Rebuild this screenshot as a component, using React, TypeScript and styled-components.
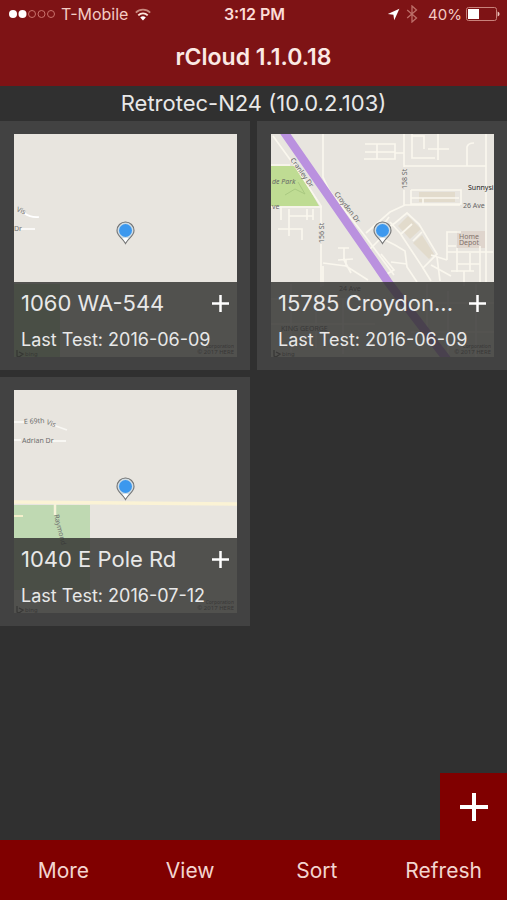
import React from "react";
import styled, { createGlobalStyle } from "styled-components";

const GlobalStyle = createGlobalStyle`
  *, *::before, *::after { box-sizing: border-box; }
  body {
    margin: 0;
    background: #303030;
    color: #e8e8e8;
    font-family: Inter, "Liberation Sans", sans-serif;
  }
  button { font: inherit; color: inherit; border: 0; padding: 0; cursor: pointer; }
  h1, h2, h3, p { margin: 0; font-weight: 400; }
`;

const Screen = styled.div`
  min-height: 100vh;
  display: flex;
  flex-direction: column;
`;

const Header = styled.header`
  background: #7e1315;
  color: #fbe9e4;
`;

const StatusBar = styled.div`
  display: grid;
  grid-template-columns: 1fr auto 1fr;
  align-items: center;
  height: 28px;
  padding: 0 7px 0 9px;
  font-size: 16px;
  color: #f3cbc4;
`;

const StatusGroup = styled.div<{ $end?: boolean }>`
  display: flex;
  align-items: center;
  gap: ${(p) => (p.$end ? 4 : 6)}px;
  justify-content: ${(p) => (p.$end ? "flex-end" : "flex-start")};
`;

const BatteryLevel = styled.span`
  padding-left: 4px;
  font-size: 15px;
`;

const Clock = styled.span`
  font-weight: 600;
  color: #fbdcd6;
`;

const Title = styled.h1`
  height: 58px;
  line-height: 58px;
  text-align: center;
  font-size: 23px;
  font-weight: 600;
`;

const DeviceName = styled.h2`
  height: 35px;
  line-height: 35px;
  text-align: center;
  font-size: 22px;
`;

const CardGrid = styled.main`
  flex: 1;
  display: grid;
  grid-template-columns: 1fr 1fr;
  align-content: start;
  gap: 7px;
`;

const Card = styled.article`
  min-width: 0;
  padding: 13px 13px 13px 14px;
  background: #424242;
`;

const MapFrame = styled.div`
  position: relative;
  aspect-ratio: 1;
  overflow: hidden;
  background: #e8e5df;
`;

const MapSvg = styled.svg`
  display: block;
  width: 100%;
  height: 100%;
  font-family: "Noto Sans", sans-serif;
`;

const Caption = styled.div`
  position: absolute;
  left: 0;
  right: 0;
  bottom: 0;
  height: 75px;
  padding: 0 8px 0 7px;
  background: rgba(48, 48, 46, 0.82);
`;

const CaptionRow = styled.div`
  display: flex;
  align-items: center;
  justify-content: space-between;
  height: 42px;
`;

const CardTitle = styled.h3`
  min-width: 0;
  font-size: 22px;
  line-height: 28px;
  white-space: nowrap;
  overflow: hidden;
  text-overflow: ellipsis;
`;

const LastTest = styled.p`
  font-size: 18px;
  line-height: 32px;
  white-space: nowrap;
`;

const IconButton = styled.button`
  display: flex;
  background: none;
`;

const Footer = styled.footer`
  position: sticky;
  bottom: 0;
`;

const AddButton = styled.button`
  position: absolute;
  right: 0;
  bottom: 100%;
  width: 67px;
  height: 67px;
  display: grid;
  place-items: center;
  background: #800000;
`;

const TabBar = styled.nav`
  display: grid;
  grid-template-columns: repeat(4, 1fr);
  height: 60px;
  background: #800000;
`;

const Tab = styled.button`
  background: none;
  color: #f3d5d0;
  font-size: 21px;
`;

const Plus = ({ size, stroke }: { size: number; stroke: number }) => (
  <svg width={size} height={size} viewBox={`0 0 ${size} ${size}`} aria-hidden="true">
    <path
      d={`M0 ${size / 2}H${size}M${size / 2} 0V${size}`}
      stroke="#fff"
      strokeWidth={stroke}
    />
  </svg>
);

const SignalIcon = () => (
  <svg width="46" height="10" viewBox="0 0 46 10" aria-hidden="true">
    <circle cx="4" cy="5" r="4" fill="#fff" />
    <circle cx="13.5" cy="5" r="4" fill="#fff" />
    <g fill="none" stroke="#c9726c" strokeWidth="1">
      <circle cx="23" cy="5" r="3.5" />
      <circle cx="32.5" cy="5" r="3.5" />
      <circle cx="42" cy="5" r="3.5" />
    </g>
  </svg>
);

const WifiIcon = () => (
  <svg width="18" height="13" viewBox="0 0 18 13" fill="none" aria-hidden="true">
    <path d="M1.8 4.6A10.2 10.2 0 0 1 16.2 4.6" stroke="#c98a80" strokeWidth="1.6" />
    <path d="M4.3 7.3A6.6 6.6 0 0 1 13.7 7.3" stroke="#fde6dc" strokeWidth="1.9" />
    <path d="M9 12.4L6.2 9.6A4 4 0 0 1 11.8 9.6Z" fill="#fff" />
  </svg>
);

const LocationIcon = () => (
  <svg width="13" height="13" viewBox="0 0 13 13" aria-hidden="true">
    <path d="M12.4 .7L7.2 12.2L6.4 6.8L.8 6.1Z" fill="#fff" />
  </svg>
);

const BluetoothIcon = () => (
  <svg width="16" height="18" viewBox="-2 0 16 18" fill="none" aria-hidden="true">
    <path d="M1.2 5L10.5 13L6 17V1L10.5 5L1.2 13" stroke="#bd6e68" strokeWidth="1.3" />
  </svg>
);

const BatteryIcon = () => (
  <svg width="34" height="14" viewBox="0 0 34 14" aria-hidden="true">
    <rect x=".5" y=".5" width="30" height="13" rx="2" fill="none" stroke="#c9827b" />
    <rect x="2" y="2" width="11" height="10" fill="#fff" />
    <path d="M31.6 4.5Q33.6 5.2 33.6 7T31.6 9.5Z" fill="#eec5bd" />
  </svg>
);

const Pin = () => (
  <g>
    <path
      d="M111.5 109.5C109 104 103 102.5 103 96.5A8.5 8.5 0 0 1 120 96.5C120 102.5 114 104 111.5 109.5Z"
      fill="#cfdde6"
      stroke="#747474"
      strokeWidth="1.1"
    />
    <path d="M108.5 104H114.5L111.5 108.5Z" fill="#fff" />
    <circle cx="111.5" cy="96.5" r="6.5" fill="#3c98ee" />
  </g>
);

const Attribution = () => (
  <g fill="#222" opacity=".7">
    <path d="M3 216V222L5 223L9 220L5 218" fill="none" stroke="#222" strokeWidth="1.3" />
    <text x="11" y="222" fontSize="6">bing</text>
    <text x="220" y="214" fontSize="5" textAnchor="end">Corporation</text>
    <text x="220" y="220" fontSize="6" textAnchor="end">© 2017 HERE</text>
  </g>
);

const WaMap = () => (
  <>
    <rect y="150" width="46" height="73" fill="#bcd6ac" />
    <path d="M10 79Q17 84 25 83M7 95H21" fill="none" stroke="#fff" strokeWidth="1.6" />
    <g fontSize="7" fill="#777">
      <text transform="translate(2 77) rotate(22)">Vis</text>
      <text x="0" y="97">Dr</text>
    </g>
  </>
);

const CroydonMap = () => (
  <>
    <path d="M0 32H25L48 72H0Z" fill="#bfdc93" />
    <path d="M14 61L24 55L34 60L27 48" fill="none" stroke="#a9c981" strokeWidth="1" />
    <g fill="#e2dbcc">
      <path d="M127 92L137 82L150 95L139 105Z" />
      <path d="M142 109L151 101L163 120L158 125Z" />
      <path d="M186 97H214V114H186Z" fill="#dfd5cd" />
      <path d="M148 58H184V68H148Z" />
    </g>
    <g fill="none" stroke="#faf7ee" strokeWidth="1.7">
      <path d="M0 31H19M0 73H51M2 2L26 35L50 72V92M52 0V43L58 56L94 102L123 141" />
      <path d="M50 110V153M10 73V86M18 75V102M18 82H42M36 75V86M7 95H31V106M42 75V86" />
      <path d="M94 10H124V25H93M94 18H124M106 10V25M124 19H133M133 0V33M133 32H215M133 56V71" />
      <path d="M141 0V24H164M141 2H153V15M167 0V26M157 15H178M196 32V13Q197 9 203 9" />
      <path d="M215 0V148M189 71H134L119 78L95 99M140 56H190V70H140V56M140 64H188M152 70V64" />
      <path d="M94 120L110 104L124 111L134 117L136 133L146 148M111 98L124 89L136 79L148 90L166 120L152 134L129 99L119 88" />
      <path d="M142 107L151 98M130 100L141 90M118 83L111 93M110 120L123 136L114 141" />
      <path d="M176 126V98H190M177 112H185M176 118H222M186 114V138M176 126L160 121M187 130H209V148M199 119V137M209 112V138" />
      <path d="M67 114H78M73 114V126L80 139M67 126L82 125M52 129L75 132L97 146M75 126V132" />
      <path d="M52 132V152M120 128L136 130M152 134L160 147M160 131L180 142M166 123L169 147M180 137H203M193 137V152" />
      <path d="M0 165H98M20 150V218M45 158V214M72 165V220M0 190H104M124 169H223M156 150V210M177 157V223M205 150V223M140 198H223" />
    </g>
    <path d="M11 -5L102 126L117 148L178 228" fill="none" stroke="#ba91df" strokeWidth="8.5" />
    <g fontSize="7" fill="#666">
      <text x="1" y="50" fontStyle="italic">de Park</text>
      <text x="1" y="75">ve</text>
      <text transform="translate(19 26) rotate(54)">Cranley Dr</text>
      <text transform="translate(63 60) rotate(52)">Croydon Dr</text>
      <text transform="translate(53 109) rotate(-90)">156 St</text>
      <text transform="translate(136 55) rotate(-90)">158 St</text>
      <text x="192" y="74">26 Ave</text>
      <text x="197" y="56" fill="#222">Sunnysi</text>
      <text x="188" y="105" fill="#82716b">Home</text>
      <text x="188" y="111" fill="#82716b">Depot</text>
      <text x="68" y="157">24 Ave</text>
      <text x="10" y="197">KING GEORGE</text>
    </g>
  </>
);

const PoleMap = () => (
  <>
    <path d="M0 115H76V200H0Z" fill="#bfd9b2" />
    <path d="M0 112L223 114" stroke="#fbf3d5" strokeWidth="3.5" />
    <path d="M41 113V125" stroke="#f7f3d9" strokeWidth="2.5" />
    <path d="M0 126H9" stroke="#f5efcb" strokeWidth="2" />
    <path d="M0 32H10M39 35L53 40M0 50H7M38 51H52" stroke="#f8f7f3" strokeWidth="1.8" />
    <g fontSize="7" fill="#6e6e6e">
      <text transform="translate(10 34) rotate(-3)">E 69th</text>
      <text transform="translate(32 34) rotate(20)">Vis</text>
      <text x="8" y="53">Adrian Dr</text>
      <text transform="translate(40 125) rotate(76)">Raymond</text>
    </g>
  </>
);

const locations = [
  { title: "1060 WA-544", date: "2016-06-09", Map: WaMap },
  { title: "15785 Croydon...", date: "2016-06-09", Map: CroydonMap },
  { title: "1040 E Pole Rd", date: "2016-07-12", Map: PoleMap },
];

const tabs = ["More", "View", "Sort", "Refresh"];

export default function App() {
  return (
    <Screen>
      <GlobalStyle />
      <Header>
        <StatusBar>
          <StatusGroup>
            <SignalIcon />
            <span>T-Mobile</span>
            <WifiIcon />
          </StatusGroup>
          <Clock>3:12 PM</Clock>
          <StatusGroup $end>
            <LocationIcon />
            <BluetoothIcon />
            <BatteryLevel>40%</BatteryLevel>
            <BatteryIcon />
          </StatusGroup>
        </StatusBar>
        <Title>rCloud 1.1.0.18</Title>
      </Header>
      <DeviceName>Retrotec-N24 (10.0.2.103)</DeviceName>
      <CardGrid>
        {locations.map(({ title, date, Map }) => (
          <Card key={title}>
            <MapFrame>
              <MapSvg viewBox="0 0 223 223" role="img" aria-label={`Map of ${title}`}>
                <rect width="223" height="223" fill="#e8e5df" />
                <Map />
                <Pin />
                <Attribution />
              </MapSvg>
              <Caption>
                <CaptionRow>
                  <CardTitle>{title}</CardTitle>
                  <IconButton type="button" aria-label={`Add test to ${title}`}>
                    <Plus size={17} stroke={2.5} />
                  </IconButton>
                </CaptionRow>
                <LastTest>Last Test: {date}</LastTest>
              </Caption>
            </MapFrame>
          </Card>
        ))}
      </CardGrid>
      <Footer>
        <AddButton type="button" aria-label="Add location">
          <Plus size={28} stroke={4} />
        </AddButton>
        <TabBar>
          {tabs.map((tab) => (
            <Tab key={tab} type="button">
              {tab}
            </Tab>
          ))}
        </TabBar>
      </Footer>
    </Screen>
  );
}
